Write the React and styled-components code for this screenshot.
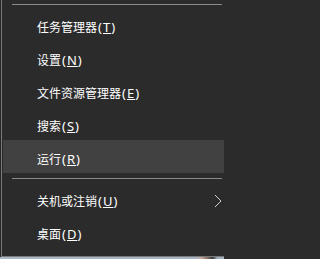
import React from "react";
import styled, { createGlobalStyle } from "styled-components";

const Global = createGlobalStyle`
  html, body { margin: 0; padding: 0; background: #2b2b2b; }
  #root { width: 224px; height: 259px; overflow: hidden; }
`;

const Page = styled.div`
  width: 224px;
  height: 259px;
  display: flex;
  flex-direction: column;
  padding-left: 1px;
  box-sizing: border-box;
  background: #262626;
`;

const Menu = styled.div`
  flex: 0 0 257px;
  box-sizing: border-box;
  display: flex;
  flex-direction: column;
  padding-top: 4px;
  background: #2b2b2b;
  border-left: 1px solid #7a7a7a;
  border-bottom: 1px solid #7a7a7a;
  font-family: "Noto Sans CJK SC", "Noto Sans", sans-serif;
  font-size: 12px;
  color: #ffffff;
`;

const Separator = styled.div`
  height: 1px;
  background: #8a8a8a;
  margin: ${(p) => p.$top}px 2px 3px 10px;
`;

const Item = styled.div`
  height: 33px;
  flex: 0 0 33px;
  box-sizing: border-box;
  display: flex;
  align-items: center;
  justify-content: space-between;
  margin-left: 1px;
  padding: 4px 2px 0 34px;
  background: ${(p) => (p.$active ? "#414141" : "transparent")};
  white-space: nowrap;
`;

const Label = styled.span`
  line-height: 14px;
  display: flex;
  align-items: center;
`;

const Hint = styled.span`
  font-family: "Noto Sans", "Open Sans", sans-serif;
  font-size: 13px;
  letter-spacing: 1px;
  margin-left: 1px;
`;

const Key = styled.span`
  text-decoration: underline;
  text-underline-offset: 1px;
`;

const Strip = styled.div`
  flex: 1;
  margin-left: -1px;
  background: linear-gradient(90deg, #a9b8c6 0%, #a4b4c3 88%, #c7a593 90%, #3a3a3a 95%, #9eb0c0 97%);
`;

const Chevron = () => (
  <svg width="8" height="14" viewBox="0 0 8 14">
    <polyline points="1,1 7,7 1,13" fill="none" stroke="#d0d0d0" strokeWidth="1" />
  </svg>
);

const items = [
  { t: "任务管理器", k: "T" },
  { t: "设置", k: "N" },
  { t: "文件资源管理器", k: "E" },
  { t: "搜索", k: "S" },
  { t: "运行", k: "R", active: true },
];

const items2 = [
  { t: "关机或注销", k: "U", sub: true },
  { t: "桌面", k: "D" },
];

const Row = ({ it }) => (
  <Item $active={it.active}>
    <Label>
      {it.t}
      <Hint>
        (<Key>{it.k}</Key>)
      </Hint>
    </Label>
    {it.sub && <Chevron />}
  </Item>
);

export default function App() {
  return (
    <>
      <Global />
      <Page>
        <Menu>
          <Separator $top={0} />
          {items.map((it) => (
            <Row key={it.t} it={it} />
          ))}
          <Separator $top={5} />
          {items2.map((it) => (
            <Row key={it.t} it={it} />
          ))}
        </Menu>
        <Strip />
      </Page>
    </>
  );
}
